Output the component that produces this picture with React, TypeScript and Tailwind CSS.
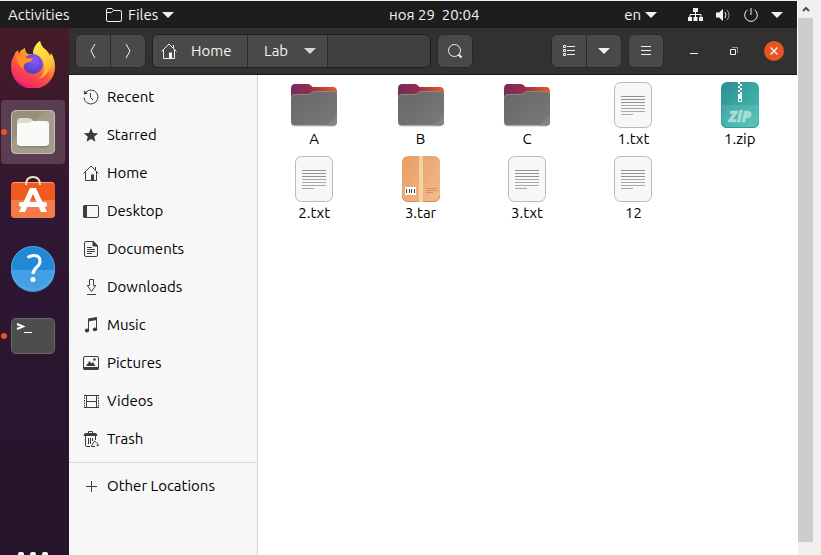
import type { ReactNode } from "react";

type IconProps = { children: ReactNode; size?: number; className?: string };

function Icon({ children, size = 16, className = "" }: IconProps) {
  return (
    <svg
      width={size}
      height={size}
      viewBox={`0 0 ${size} ${size}`}
      fill="none"
      stroke="currentColor"
      aria-hidden="true"
      className={`block shrink-0 ${className}`}
    >
      {children}
    </svg>
  );
}

function Caret({ className = "" }: { className?: string }) {
  return (
    <svg width="12" height="6" viewBox="0 0 12 6" fill="currentColor" aria-hidden="true" className={`block shrink-0 ${className}`}>
      <path d="M0 0h12L6 6z" />
    </svg>
  );
}

const homeIcon = (
  <Icon>
    <path d="M.5 8.500 8 1l7.500 7.500M12.500 2v3" />
    <path d="M2.500 7v8.500h11V7" />
    <path d="M8 9.500h3V15H8z" fill="currentColor" stroke="none" />
  </Icon>
);

const places: { name: string; icon: ReactNode }[] = [
  {
    name: "Recent",
    icon: (
      <Icon>
        <path d="M2.800 3.300A7 7 0 1 1 1 8.500" />
        <path d="M.8 1.500 1 5.500l3.800-1z" fill="currentColor" stroke="none" />
        <path d="M7.500 4v4.500l2.500 2.500" />
      </Icon>
    ),
  },
  {
    name: "Starred",
    icon: (
      <Icon>
        <path
          d="m8 1 2 4.900 5.200.4-4 3.400 1.300 5.100L8 12l-4.500 2.800 1.300-5.100-4-3.400L6 5.900z"
          fill="currentColor"
          stroke="none"
        />
      </Icon>
    ),
  },
  { name: "Home", icon: homeIcon },
  {
    name: "Desktop",
    icon: (
      <Icon>
        <rect x=".5" y="2.500" width="15" height="12" rx="1.500" />
        <path d="M0 4q0-2 2-2h2v13H2q-2 0-2-2z" fill="currentColor" stroke="none" />
      </Icon>
    ),
  },
  {
    name: "Documents",
    icon: (
      <Icon>
        <path d="M10.500.5H3Q1.500.5 1.500 2v12q0 1.500 1.500 1.500h10q1.500 0 1.500-1.500V4.500z" />
        <path d="M10 0v5h5z" fill="currentColor" />
        <path d="M4 6.500h5M4 8.500h8M4 10.500h8M4 12.500h5" />
      </Icon>
    ),
  },
  {
    name: "Downloads",
    icon: (
      <Icon>
        <path d="M6.500.5h4v6h2.200l-4.200 6-4.200-6h2.200zM4 15.500h9" />
      </Icon>
    ),
  },
  {
    name: "Music",
    icon: (
      <Icon>
        <path d="M5.500 13V2.500l8-1.500v11" />
        <path d="M5 1.500 14 0v3L5 4.500z" fill="currentColor" stroke="none" />
        <ellipse cx="4" cy="13.500" rx="2.200" ry="1.900" fill="currentColor" stroke="none" />
        <ellipse cx="12" cy="12.300" rx="2.200" ry="1.900" fill="currentColor" stroke="none" />
      </Icon>
    ),
  },
  {
    name: "Pictures",
    icon: (
      <Icon>
        <rect x=".5" y="1.500" width="15" height="13" rx="1.500" />
        <path d="M0 12h16v1q0 2-2 2H2q-2 0-2-2z" fill="currentColor" stroke="none" />
        <path d="m3 11 3.500-5 2 2.500L10 7l2.500 4z" fill="currentColor" stroke="none" />
        <circle cx="11.500" cy="4.500" r="1.300" fill="currentColor" stroke="none" />
      </Icon>
    ),
  },
  {
    name: "Videos",
    icon: (
      <Icon>
        <path d="M3.500 2v13M13.500 2v13M3 2.500h11M3 8.500h11M3 14.500h11" />
        <path d="M1.500 2v13M15.500 2v13" strokeDasharray="1.500 1" />
        <path d="M1 2.500h2M1 14.500h2M14 2.500h2M14 14.500h2" />
      </Icon>
    ),
  },
  {
    name: "Trash",
    icon: (
      <Icon>
        <path d="M5.500 2V.5h4V2" />
        <path d="M1 4.500q0-2 2-2h9q2 0 2 2z" fill="currentColor" />
        <path d="M2.500 5v9q0 1.500 1.500 1.500h3M12.500 5v4M5.500 7v6M7.500 7v6M9.500 7v3" />
        <path d="m9.500 13 2-3 2 1.500M14 11.500l1.500 3h-2M12 15.500H8.500l1-2.500" />
      </Icon>
    ),
  },
];

type Kind = "folder" | "text" | "zip" | "tar";

const files: { name: string; kind: Kind }[] = [
  { name: "A", kind: "folder" },
  { name: "B", kind: "folder" },
  { name: "C", kind: "folder" },
  { name: "1.txt", kind: "text" },
  { name: "1.zip", kind: "zip" },
  { name: "2.txt", kind: "text" },
  { name: "3.tar", kind: "tar" },
  { name: "3.txt", kind: "text" },
  { name: "12", kind: "text" },
];

function FileIcon({ kind }: { kind: Kind }) {
  return (
    <svg width="48" height="48" viewBox="0 0 48 48" aria-hidden="true" className="block">
      <defs>
        <linearGradient id="folderBack" x1="0" y1="0" x2="1" y2="0">
          <stop offset="0" stopColor="#77285d" />
          <stop offset=".45" stopColor="#96304a" />
          <stop offset=".65" stopColor="#b84038" />
          <stop offset="1" stopColor="#f0582a" />
        </linearGradient>
        <linearGradient id="folderFront" x1="0" y1="0" x2="1" y2="1">
          <stop offset="0" stopColor="#666" />
          <stop offset="1" stopColor="#7a7a7a" />
        </linearGradient>
        <linearGradient id="zipBody" x1="0" y1="0" x2="1" y2="1">
          <stop offset="0" stopColor="#2b8f92" />
          <stop offset="1" stopColor="#48c0b4" />
        </linearGradient>
        <linearGradient id="tarBody" x1="0" y1="0" x2="1" y2="1">
          <stop offset="0" stopColor="#e99d62" />
          <stop offset="1" stopColor="#f0bb8e" />
        </linearGradient>
      </defs>
      {kind === "folder" && (
        <>
          <path d="M1 8q0-5 4-5h13q2 0 3 1.500L22.500 6H43q4 0 4 5v16H1z" fill="url(#folderBack)" />
          <path d="M1 41q0 4 4 4h38q4 0 4-4" fill="none" stroke="#c4c4c4" />
          <path d="M1 17q0-4 4-4h13q2 0 3.500-1.500T25 10h18q4 0 4 4v26q0 4.500-4 4.500H5q-4 0-4-4.500z" fill="url(#folderFront)" />
          <path d="M1.500 17q0-3.500 3.500-3.500h13q2 0 3.500-1.500T25 10.500h18q3.500 0 3.500 3" fill="none" stroke="#8a8a8a" />
          <path d="m36 44.500 11-10V40q0 4.500-4 4.500z" fill="#848484" />
        </>
      )}
      {kind === "text" && (
        <>
          <rect x="5.500" y="1.500" width="37" height="45" rx="6" fill="#f7f7f7" stroke="#b9b9b9" />
          <path d="M12 15.500h24M12 18.500h24M12 21.500h24" stroke="#929292" />
          <path d="M12 24.500h24M12 27.500h24M12 30.500h24M12 33.500h12" stroke="#a9a9a9" />
        </>
      )}
      {kind === "zip" && (
        <>
          <rect x="5" y="1" width="38" height="46" rx="6" fill="url(#zipBody)" />
          <path d="M6 24h36v16q0 6-6 6H12q-6 0-6-6z" fill="#fff" opacity=".1" />
          <path d="M5.500 41q0 5.500 5.500 5.500h26q5.500 0 5.500-5.500" fill="none" stroke="#2aa198" />
          <path
            d="M22 1h2v2h-2zM24 3h2v2h-2zM22 5h2v2h-2zM24 7h2v2h-2zM22 9h2v2h-2zM24 11h2v2h-2zM22 13h4v1h-4z"
            fill="#fff"
          />
          <path d="M22 14h4v7h-4zM23 18v2h2v-2z" fill="#fff" fillRule="evenodd" />
          <text
            x="24"
            y="41"
            textAnchor="middle"
            fontSize="15"
            fontWeight="800"
            fontStyle="italic"
            fill="#a5dfd8"
            stroke="#a5dfd8"
            strokeWidth=".5"
            className="font-['Open_Sans',sans-serif]"
          >
            ZiP
          </text>
        </>
      )}
      {kind === "tar" && (
        <>
          <rect x="5" y="1" width="38" height="46" rx="6" fill="url(#tarBody)" />
          <path d="M5.500 41q0 5.500 5.500 5.500h26q5.500 0 5.500-5.500" fill="none" stroke="#dc8f5a" />
          <path d="M22 1h4v46h-4z" fill="#f3d3a0" />
          <path d="M8 32h11v8H8z" fill="#fff" />
          <path d="M9.500 34v4M12.500 34v4M14.500 34v4M17.500 34v4" stroke="#444" />
          <path d="M29 33.500h11M29 35.500h11M29 37.500h7" stroke="#dd9260" />
        </>
      )}
    </svg>
  );
}

function FirefoxIcon() {
  return (
    <svg width="48" height="48" viewBox="0 0 48 48" aria-hidden="true">
      <defs>
        <linearGradient id="foxBody" x1=".8" y1="0" x2=".3" y2="1">
          <stop offset=".1" stopColor="#fff04a" />
          <stop offset=".35" stopColor="#ffab2e" />
          <stop offset=".6" stopColor="#ff5b3a" />
          <stop offset="1" stopColor="#e6157c" />
        </linearGradient>
        <radialGradient id="foxGlobe" cx=".6" cy=".3" r=".8">
          <stop offset="0" stopColor="#9059ff" />
          <stop offset="1" stopColor="#4a3bb5" />
        </radialGradient>
        <linearGradient id="foxTail" x1="0" y1="0" x2=".2" y2="1">
          <stop offset="0" stopColor="#fff44f" />
          <stop offset="1" stopColor="#ffb02e" />
        </linearGradient>
      </defs>
      <path
        d="M5 16q1-4 4-6l1 4q1-4 6-6 0 4 3 6h5q0-8 7-13 1 6 6 9 3 3 4 6l1-3q4 6 4 14a22 22 0 0 1-44 0q0-7 3-11z"
        fill="url(#foxBody)"
      />
      <circle cx="24" cy="24" r="10" fill="url(#foxGlobe)" />
      <path d="M8 17q5-3 10 1l6 .5q-1 3.500-7 4.500-4 3-2 7-7-5-7-13z" fill="#ff9226" />
      <path d="M24 13q1-8 7-12 1 6 6 9 7 7 5 17-3 9-12 12 7-6 5-15-2-8-11-11z" fill="url(#foxTail)" />
      <path d="M8 27q3 11 14 13 13 1 18-10-1 12-14 15Q10 46 4 32z" fill="#ff3d55" opacity=".55" />
    </svg>
  );
}

function FilesAppIcon() {
  return (
    <svg width="48" height="48" viewBox="0 0 48 48" aria-hidden="true">
      <rect x="2" y="2" width="44" height="44" rx="5" fill="#968f7c" />
      <path d="M2 34 38 2h3q5 0 5 5v34q0 5-5 5H7q-5 0-5-5z" fill="#a39c8a" />
      <rect x="2.500" y="2.500" width="43" height="43" rx="5" fill="none" stroke="#c4bfb0" />
      <path d="M8 14q0-4 4-4h8q2 0 3 1.500L25 14v4H8z" fill="#dedacb" />
      <path d="M8 18q0-3 3-3h9l4-2h13q3 0 3 3v19q0 3-3 3H11q-3 0-3-3z" fill="#fafaf8" />
      <path d="M8.500 37q1 2 3 2h25q2 0 3-2" fill="none" stroke="#7d7665" />
    </svg>
  );
}

function SoftwareIcon() {
  return (
    <svg width="48" height="48" viewBox="0 0 48 48" aria-hidden="true">
      <rect x="2" y="6" width="44" height="36" rx="4" fill="#f0591f" />
      <path d="M2 24h44v14q0 4-4 4H6q-4 0-4-4z" fill="#f47b4a" />
      <path d="M3 7.500q1-1 3-1h36q2 0 3 1" fill="none" stroke="#f9a27c" />
      <path d="M17 9q0-8 7-8t7 8" fill="none" stroke="#f7dfb5" strokeWidth="2" />
      <path d="M21 12h6l11 24h-6l-8-18-8 18h-6z" fill="#fff" />
      <rect x="10" y="26" width="28" height="5" rx="2" fill="#fff" />
    </svg>
  );
}

function HelpIcon() {
  return (
    <svg width="48" height="48" viewBox="0 0 48 48" aria-hidden="true">
      <circle cx="24" cy="24" r="22" fill="#2389d6" />
      <path d="M2 26a22 22 0 0 0 44 0z" fill="#43a0e2" />
      <circle cx="24" cy="24" r="21.500" fill="none" stroke="#6db8ec" opacity=".6" />
      <path d="M18.500 13.500q3-2 6.500-2 6 0 6 5.500 0 3.500-3.500 6.500T24 30" fill="none" stroke="#fff" strokeWidth="3" />
      <circle cx="24" cy="35.500" r="2.500" fill="#fff" />
    </svg>
  );
}

function TerminalIcon() {
  return (
    <svg width="48" height="48" viewBox="0 0 48 48" aria-hidden="true">
      <rect x="2" y="6" width="44" height="36" rx="5" fill="#4d4d4d" />
      <rect x="2.500" y="6.500" width="43" height="35" rx="4.500" fill="none" stroke="#686868" />
      <path d="m8 12 6 2.500L8 17" fill="none" stroke="#fff" strokeWidth="2" />
      <path d="M15 20.500h8" stroke="#fff" strokeWidth="1" />
    </svg>
  );
}

const dock: { name: string; icon: ReactNode; running?: boolean; active?: boolean }[] = [
  { name: "Firefox", icon: <FirefoxIcon /> },
  { name: "Files", icon: <FilesAppIcon />, running: true, active: true },
  { name: "Software", icon: <SoftwareIcon /> },
  { name: "Help", icon: <HelpIcon /> },
  { name: "Terminal", icon: <TerminalIcon />, running: true },
];

function TopBar() {
  return (
    <header className="flex h-7 shrink-0 items-center border-t border-[#eef3f3] bg-[#1d1d1d] pr-3.5 text-[#f2f2f2]">
      <div className="flex w-[389px] shrink-0 items-center pl-2">
        <button className="w-[98px] text-left">Activities</button>
        <button className="flex items-center">
          <Icon className="mr-1.5">
            <path d="M.5 3Q.5 1.500 2 1.500h4L8 3.500h6q1.500 0 1.500 1.500v8q0 1.500-1.500 1.500H2q-1.500 0-1.500-1.500zM.5 5.500h5l2-2" />
          </Icon>
          Files
          <Caret className="ml-1" />
        </button>
      </div>
      <button className="whitespace-pre">ноя 29  20:04</button>
      <div className="ml-auto flex items-center">
        <button className="mr-[30px] flex items-center gap-1">
          en
          <Caret />
        </button>
        <button aria-label="System menu" className="flex items-center gap-3">
          <Icon>
            <path d="M6 1h5v4H6zM1 10h4v4H1zM6.500 10h4v4h-4zM12 10h4v4h-4z" fill="currentColor" stroke="none" />
            <path d="M8.500 5v5M3 10V7.500h11V10" />
          </Icon>
          <Icon>
            <path d="M1 5.500h3L8 2v12l-4-3.500H1z" fill="currentColor" stroke="none" />
            <path d="M10 5q2 3 0 6" />
            <path d="M12 3q4 5 0 10" opacity=".6" />
          </Icon>
          <Icon>
            <path d="M4.500 2.800a6.300 6.300 0 1 0 7 0M8 1v7" />
          </Icon>
          <Caret />
        </button>
      </div>
    </header>
  );
}

function Dock() {
  return (
    <nav
      aria-label="Dock"
      className="flex w-[69px] shrink-0 flex-col gap-1 overflow-hidden bg-linear-to-b from-[#451b27] via-[#2f1633] via-40% to-[#25152a] pt-1"
    >
      {dock.map((app) => (
        <button
          key={app.name}
          aria-label={app.name}
          className={`relative ml-px flex size-16 shrink-0 items-center justify-center rounded ${app.active ? "bg-[#5b3d52]" : ""}`}
        >
          {app.running && <span className="absolute top-[29px] left-0 size-1.5 rounded-full bg-[#e95420]" />}
          {app.icon}
        </button>
      ))}
      <button aria-label="Show Applications" className="mt-auto flex h-[3px] w-[65px] items-start justify-center gap-1.5 overflow-hidden">
        <span className="size-1.5 shrink-0 rounded-xs bg-[#f4f4f4]" />
        <span className="size-1.5 shrink-0 rounded-xs bg-[#f4f4f4]" />
        <span className="size-1.5 shrink-0 rounded-xs bg-[#f4f4f4]" />
      </button>
    </nav>
  );
}

function HeaderBar() {
  return (
    <div className="flex h-[47px] shrink-0 items-center border-b border-[#1c1b1b] bg-[#333031] px-1.5 text-[#f2f2f2]">
      <div className="mr-1.5 flex h-[34px] w-[71px] shrink-0 rounded-md border border-[#2a2828] bg-[#4a4947]">
        <button aria-label="Back" className="flex flex-1 items-center justify-center border-r border-[#2a2828]">
          <Icon>
            <path d="m10 1-4 7 4 7" />
          </Icon>
        </button>
        <button aria-label="Forward" className="flex flex-1 items-center justify-center">
          <Icon>
            <path d="m6 1 4 7-4 7" />
          </Icon>
        </button>
      </div>
      <nav aria-label="Path" className="mr-1.5 flex h-[34px] w-[279px] shrink-0 overflow-hidden rounded-md border border-[#201f1f] bg-[#41403e]">
        <button className="flex w-[95px] items-center gap-3.5 border-r border-[#2a2828] bg-[#4a4947] pl-2">
          {homeIcon}
          Home
        </button>
        <button className="flex w-20 items-center gap-4 border-r border-[#2a2828] bg-[#4a4947] pl-4">
          Lab
          <Caret className="text-[#d8d5d2]" />
        </button>
      </nav>
      <button aria-label="Search" className="flex h-[34px] w-9 items-center justify-center rounded-md border border-[#2a2828] bg-[#4a4947]">
        <Icon>
          <circle cx="7.500" cy="7.500" r="6" />
          <path d="m11.500 11.500 3 3" strokeWidth="2" />
        </Icon>
      </button>
      <div className="mr-1.5 ml-auto flex h-[34px] w-[71px] shrink-0 rounded-md border border-[#2a2828] bg-[#4a4947]">
        <button aria-label="List view" className="flex flex-1 items-center justify-center border-r border-[#2a2828]">
          <Icon>
            <path d="M2.500 2.500h2v2h-2zM2.500 6.500h2v2h-2zM2.500 10.500h2v2h-2zM6 3.500h8M6 7.500h8M6 11.500h8" />
          </Icon>
        </button>
        <button aria-label="View options" className="flex flex-1 items-center justify-center">
          <Caret />
        </button>
      </div>
      <button aria-label="Menu" className="mr-5 flex h-[34px] w-9 items-center justify-center rounded-md border border-[#2a2828] bg-[#4a4947]">
        <Icon>
          <path d="M3 3.500h10M3 7.500h10M3 11.500h10" />
        </Icon>
      </button>
      <div className="flex items-center gap-5 pr-[7px]">
        <button aria-label="Minimize" className="flex size-5 items-center justify-center">
          <Icon>
            <path d="M4 10.500h8" />
          </Icon>
        </button>
        <button aria-label="Restore" className="flex size-5 items-center justify-center">
          <Icon>
            <path d="M4.500 6.500h5v5h-5z" />
            <path d="M6 4.500h5.500V10" opacity=".5" />
          </Icon>
        </button>
        <button aria-label="Close" className="flex size-5 items-center justify-center rounded-full bg-[#e95420]">
          <Icon>
            <path d="m4.500 4.500 7 7m0-7-7 7" strokeWidth="1.500" />
          </Icon>
        </button>
      </div>
    </div>
  );
}

function Place({ name, icon }: { name: string; icon: ReactNode }) {
  return (
    <a href="#" className="flex h-[38px] items-center gap-2 pl-3.5">
      <span className="text-[#3d3d3d]">{icon}</span>
      {name}
    </a>
  );
}

export default function App() {
  return (
    <div className="flex h-screen overflow-hidden bg-white font-['Ubuntu','Noto_Sans',sans-serif] text-[15px] leading-5 text-black">
      <div className="flex min-w-0 flex-1 flex-col">
        <TopBar />
        <div className="flex min-h-0 flex-1">
          <Dock />
          <div className="flex min-w-0 flex-1 flex-col">
            <HeaderBar />
            <div className="flex min-h-0 flex-1">
              <aside className="w-[189px] shrink-0 border-r border-[#d5d5d5] bg-[#f7f7f7] pt-[3px]">
                {places.map((place) => (
                  <Place key={place.name} {...place} />
                ))}
                <hr className="my-1 border-[#d8d8d8]" />
                <Place
                  name="Other Locations"
                  icon={
                    <Icon>
                      <path d="M3 8.500h11M8.500 3v11" />
                    </Icon>
                  }
                />
              </aside>
              <main className="grid flex-1 auto-rows-max grid-cols-5 content-start gap-y-1.5 bg-white pt-1.5 pr-1 pl-[3px]">
                {files.map((file) => (
                  <button key={file.name} className="flex flex-col items-center">
                    <FileIcon kind={file.kind} />
                    <span>{file.name}</span>
                  </button>
                ))}
              </main>
            </div>
          </div>
        </div>
      </div>
      <div className="flex w-6 shrink-0 flex-col border-l border-white bg-[#f0f0f0] pb-[13px]">
        <button aria-label="Scroll up" className="flex h-[18px] w-[15px] shrink-0 items-center justify-center text-[#505050]">
          <svg width="8" height="8" viewBox="0 0 8 8" fill="none" stroke="currentColor" strokeWidth="2" aria-hidden="true">
            <path d="m1 6 3-3 3 3" />
          </svg>
        </button>
        <div className="w-[15px] flex-1 bg-[#cdcdcd]" />
      </div>
    </div>
  );
}
